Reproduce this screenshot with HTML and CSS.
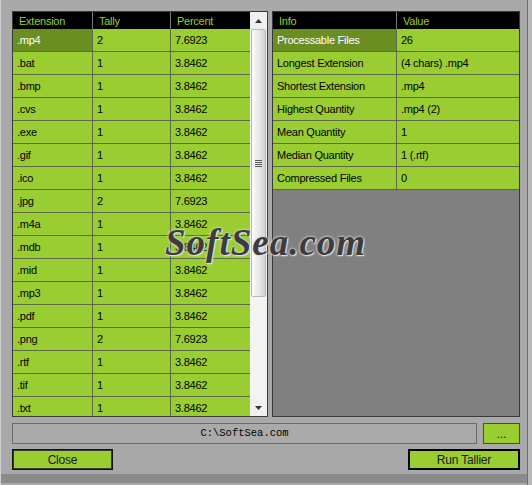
FILE: index.html
```
<!DOCTYPE html>
<html>
<head>
<meta charset="utf-8">
<title>Tallier</title>
<link rel="stylesheet" href="styles.css">
</head>
<body>
<div class="app">
  <div class="panels">
    <div class="panel left">
      <div class="grid ext">
        <div class="row head"><div class="c">Extension</div><div class="c">Tally</div><div class="c">Percent</div></div>
        <div class="row"><div class="c sel">.mp4</div><div class="c">2</div><div class="c">7.6923</div></div>
        <div class="row"><div class="c">.bat</div><div class="c">1</div><div class="c">3.8462</div></div>
        <div class="row"><div class="c">.bmp</div><div class="c">1</div><div class="c">3.8462</div></div>
        <div class="row"><div class="c">.cvs</div><div class="c">1</div><div class="c">3.8462</div></div>
        <div class="row"><div class="c">.exe</div><div class="c">1</div><div class="c">3.8462</div></div>
        <div class="row"><div class="c">.gif</div><div class="c">1</div><div class="c">3.8462</div></div>
        <div class="row"><div class="c">.ico</div><div class="c">1</div><div class="c">3.8462</div></div>
        <div class="row"><div class="c">.jpg</div><div class="c">2</div><div class="c">7.6923</div></div>
        <div class="row"><div class="c">.m4a</div><div class="c">1</div><div class="c">3.8462</div></div>
        <div class="row"><div class="c">.mdb</div><div class="c">1</div><div class="c">3.8462</div></div>
        <div class="row"><div class="c">.mid</div><div class="c">1</div><div class="c">3.8462</div></div>
        <div class="row"><div class="c">.mp3</div><div class="c">1</div><div class="c">3.8462</div></div>
        <div class="row"><div class="c">.pdf</div><div class="c">1</div><div class="c">3.8462</div></div>
        <div class="row"><div class="c">.png</div><div class="c">2</div><div class="c">7.6923</div></div>
        <div class="row"><div class="c">.rtf</div><div class="c">1</div><div class="c">3.8462</div></div>
        <div class="row"><div class="c">.tif</div><div class="c">1</div><div class="c">3.8462</div></div>
        <div class="row"><div class="c">.txt</div><div class="c">1</div><div class="c">3.8462</div></div>
      </div>
      <div class="scrollbar">
        <div class="sbtn"><svg width="7" height="4" viewBox="0 0 7 4"><path d="M0 4 L3.5 0 L7 4 Z" fill="#333"/></svg></div>
        <div class="thumb"><div class="grip"><i></i><i></i><i></i><i></i></div></div>
        <div class="track"></div>
        <div class="sbtn"><svg width="7" height="4" viewBox="0 0 7 4"><path d="M0 0 L3.5 4 L7 0 Z" fill="#333"/></svg></div>
      </div>
    </div>
    <div class="panel right">
      <div class="grid info">
        <div class="row head"><div class="c">Info</div><div class="c">Value</div></div>
        <div class="row"><div class="c sel">Processable Files</div><div class="c">26</div></div>
        <div class="row"><div class="c">Longest Extension</div><div class="c">(4 chars) .mp4</div></div>
        <div class="row"><div class="c">Shortest Extension</div><div class="c">.mp4</div></div>
        <div class="row"><div class="c">Highest Quantity</div><div class="c">.mp4 (2)</div></div>
        <div class="row"><div class="c">Mean Quantity</div><div class="c">1</div></div>
        <div class="row"><div class="c">Median Quantity</div><div class="c">1 (.rtf)</div></div>
        <div class="row"><div class="c">Compressed Files</div><div class="c">0</div></div>
      </div>
    </div>
  </div>
  <div class="pathrow">
    <div class="path">C:\SoftSea.com</div>
    <button class="btn browse">...</button>
  </div>
  <div class="btnrow">
    <button class="btn close">Close</button>
    <button class="btn run">Run Tallier</button>
  </div>
  <div class="strip"></div>
  <div class="watermark">SoftSea.com</div>
</div>
</body>
</html>
```

FILE: styles.css
```
html, body {
  margin: 0;
  padding: 0;
  background: #b8b8b8;
}
body {
  font-family: "Liberation Sans", Arial, sans-serif;
  font-size: 11px;
  letter-spacing: -0.25px;
}
.app {
  position: relative;
  width: 528px;
  height: 485px;
  box-sizing: border-box;
  background: #a9a9a9;
  border-left: 1px solid #d0d0d0;
  border-right: 1px solid #6e6e6e;
  padding: 11px 0 0 11px;
  overflow: hidden;
}
.panels {
  display: flex;
  gap: 4px;
  height: 406px;
}
.panel {
  box-sizing: border-box;
  border: 1px solid #3a3a3a;
  height: 406px;
  overflow: hidden;
}
.left {
  width: 256px;
  display: flex;
}
.right {
  width: 248px;
  background: #808080;
}
.grid {
  display: flex;
  flex-direction: column;
}
.ext {
  width: 237px;
}
.info {
  width: 246px;
}
.row {
  display: grid;
  height: 23px;
  box-sizing: border-box;
  border-bottom: 1px solid #5e6a46;
  background: #9acd32;
  flex: none;
}
.ext .row {
  grid-template-columns: 80px 78px 79px;
}
.info .row {
  grid-template-columns: 124px 122px;
}
.row .c {
  padding: 1px 0 0 4px;
  line-height: 21px;
  color: #000;
  white-space: nowrap;
  overflow: hidden;
  border-right: 1px solid #5e6a46;
}
.row .c:last-child {
  border-right: none;
}
.row .c.sel {
  background: #6b8e23;
  color: #fff;
}
.row.head {
  height: 17px;
  background: #000;
  border-bottom: none;
}
.row.head .c {
  color: #9acd32;
  padding: 1px 0 0 6px;
  line-height: 16px;
  border-right: 1px solid #7a7a7a;
}
.row.head .c:last-child {
  border-right: none;
}
.scrollbar {
  width: 17px;
  display: flex;
  flex-direction: column;
  background: #f0f0f0;
}
.sbtn {
  height: 17px;
  flex: none;
  display: flex;
  align-items: center;
  justify-content: center;
  background: #f0f0f0;
}
.thumb {
  height: 268px;
  flex: none;
  box-sizing: border-box;
  margin: 0 1px;
  border: 1px solid #b9b9b9;
  border-radius: 2px;
  background: linear-gradient(to right, #fbfbfb, #e6e6e6 60%, #d2d2d2);
  display: flex;
  align-items: center;
  justify-content: center;
}
.grip {
  display: flex;
  flex-direction: column;
  gap: 1px;
}
.grip i {
  display: block;
  width: 7px;
  height: 1px;
  background: #555;
}
.track {
  flex: 1;
  background: #f3f3f3;
}
.pathrow {
  display: flex;
  gap: 6px;
  margin-top: 6px;
  height: 21px;
  width: 508px;
}
.path {
  width: 465px;
  box-sizing: border-box;
  border: 1px solid #6a6a6a;
  background: #aaaaaa;
  font-family: "Liberation Mono", "Courier New", monospace;
  font-size: 10.5px;
  letter-spacing: 0;
  text-align: center;
  line-height: 19px;
  color: #000;
}
.btn {
  box-sizing: border-box;
  background: #9acd32;
  font-family: "Liberation Sans", Arial, sans-serif;
  font-size: 12px;
  letter-spacing: -0.2px;
  color: #1a1a1a;
  padding: 0;
  margin: 0;
  height: 21px;
}
.browse {
  width: 37px;
  border: 1px solid #4a4a4a;
  line-height: 14px;
}
.btnrow {
  display: flex;
  justify-content: space-between;
  margin-top: 5px;
  width: 508px;
}
.close {
  width: 101px;
  border: 1px solid #111;
  box-shadow: inset 0 0 0 1px #3a3a3a;
}
.run {
  width: 112px;
  border: 2px solid #000;
}
.strip {
  position: absolute;
  left: 0;
  right: 0;
  top: 474px;
  height: 9px;
  background: #8a8a8a;
}
.watermark {
  position: absolute;
  left: 164px;
  top: 221px;
  font-family: "Liberation Serif", "Times New Roman", serif;
  font-style: italic;
  font-weight: bold;
  font-size: 37px;
  letter-spacing: 1px;
  color: #3c3c3c;
  text-shadow: 0 0 2px #e0e0e0, 0 0 3px #d0d0d0, 1px 1px 1px #eee;
  pointer-events: none;
}
```
